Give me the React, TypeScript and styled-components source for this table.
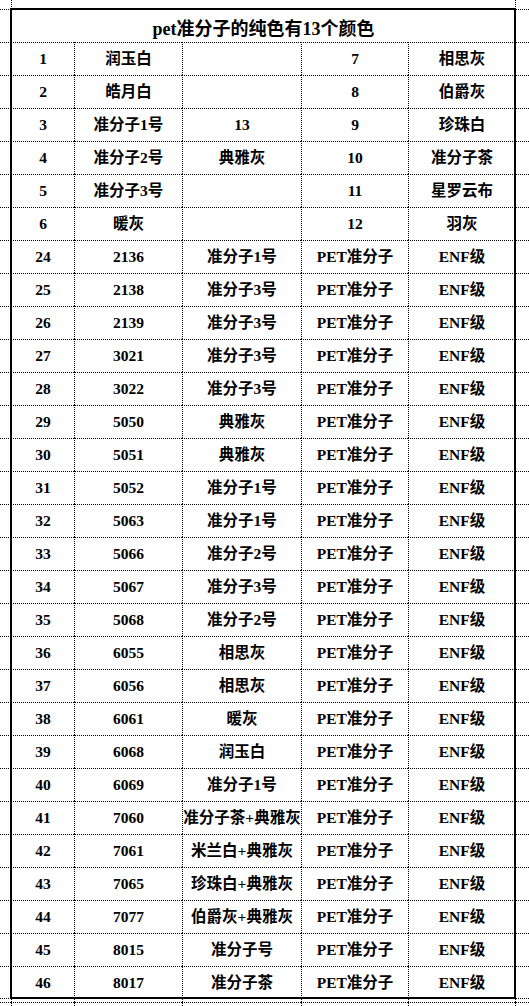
import { Fragment } from "react";
import styled, { createGlobalStyle } from "styled-components";

const GlobalStyle = createGlobalStyle`
  html, body {
    margin: 0;
    padding: 0;
    background: #fff;
  }
`;

// column widths follow the sheet's gridlines: 11 | 74 | 182 | 301 | 408 | 515
const Sheet = styled.div`
  position: relative;
  display: grid;
  grid-template-columns: 11px 63px 108px 119px 107px 107px 1fr;
  grid-template-rows: 9px 33px repeat(28, 33px) 32px 4px 1fr;
  width: 529px;
  height: 1006px;
  overflow: hidden;
  font-family: "Liberation Serif", "Noto Sans CJK SC", serif;
  font-weight: 700;
  color: #000;
`;

const Cell = styled.div<{ $span?: number; $edge?: boolean; $open?: boolean }>`
  box-sizing: border-box;
  grid-column: span ${({ $span }) => $span ?? 1};
  border-top: ${({ $open }) => ($open ? "none" : "1px dotted #000")};
  border-left: ${({ $edge }) => ($edge ? "none" : "1px dotted #000")};
  display: flex;
  align-items: center;
  justify-content: center;
  white-space: nowrap;
  font-size: 15.5px;
  line-height: 1;
  min-width: 0;
`;

const TitleCell = styled(Cell)`
  font-size: 18px;
  padding-top: 6px;
`;

// thick frame drawn over the sheet gridlines around the table area
const Frame = styled.div`
  position: absolute;
  inset: 0;
  grid-row: 2 / 32;
  grid-column: 2 / 7;
  outline: 2px solid #000;
  outline-offset: -1px;
  pointer-events: none;
`;

const colors: [string, string, string, string, string][] = [
  ["1", "润玉白", "", "7", "相思灰"],
  ["2", "皓月白", "", "8", "伯爵灰"],
  ["3", "准分子1号", "13", "9", "珍珠白"],
  ["4", "准分子2号", "典雅灰", "10", "准分子茶"],
  ["5", "准分子3号", "", "11", "星罗云布"],
  ["6", "暖灰", "", "12", "羽灰"],
];

const products: [string, string, string][] = [
  ["24", "2136", "准分子1号"],
  ["25", "2138", "准分子3号"],
  ["26", "2139", "准分子3号"],
  ["27", "3021", "准分子3号"],
  ["28", "3022", "准分子3号"],
  ["29", "5050", "典雅灰"],
  ["30", "5051", "典雅灰"],
  ["31", "5052", "准分子1号"],
  ["32", "5063", "准分子1号"],
  ["33", "5066", "准分子2号"],
  ["34", "5067", "准分子3号"],
  ["35", "5068", "准分子2号"],
  ["36", "6055", "相思灰"],
  ["37", "6056", "相思灰"],
  ["38", "6061", "暖灰"],
  ["39", "6068", "润玉白"],
  ["40", "6069", "准分子1号"],
  ["41", "7060", "准分子茶+典雅灰"],
  ["42", "7061", "米兰白+典雅灰"],
  ["43", "7065", "珍珠白+典雅灰"],
  ["44", "7077", "伯爵灰+典雅灰"],
  ["45", "8015", "准分子号"],
  ["46", "8017", "准分子茶"],
];

function Row({ cells }: { cells: string[] }) {
  return (
    <>
      <Cell $edge />
      {cells.map((c, i) => (
        <Cell key={i}>{c}</Cell>
      ))}
      <Cell />
    </>
  );
}

export default function App() {
  const rows = [
    ...colors,
    ...products.map(([n, code, color]) => [n, code, color, "PET准分子", "ENF级"]),
  ];

  return (
    <>
      <GlobalStyle />
      <Sheet>
        <Cell $edge $open />
        <Cell $open $span={5} />
        <Cell $open />

        <Cell $edge />
        <TitleCell $span={5}>pet准分子的纯色有13个颜色</TitleCell>
        <Cell />

        {rows.map((r, i) => (
          <Fragment key={i}>
            <Row cells={r} />
          </Fragment>
        ))}

        <Row cells={["", "", "", "", ""]} />
        <Row cells={["", "", "", "", ""]} />

        <Frame />
      </Sheet>
    </>
  );
}
